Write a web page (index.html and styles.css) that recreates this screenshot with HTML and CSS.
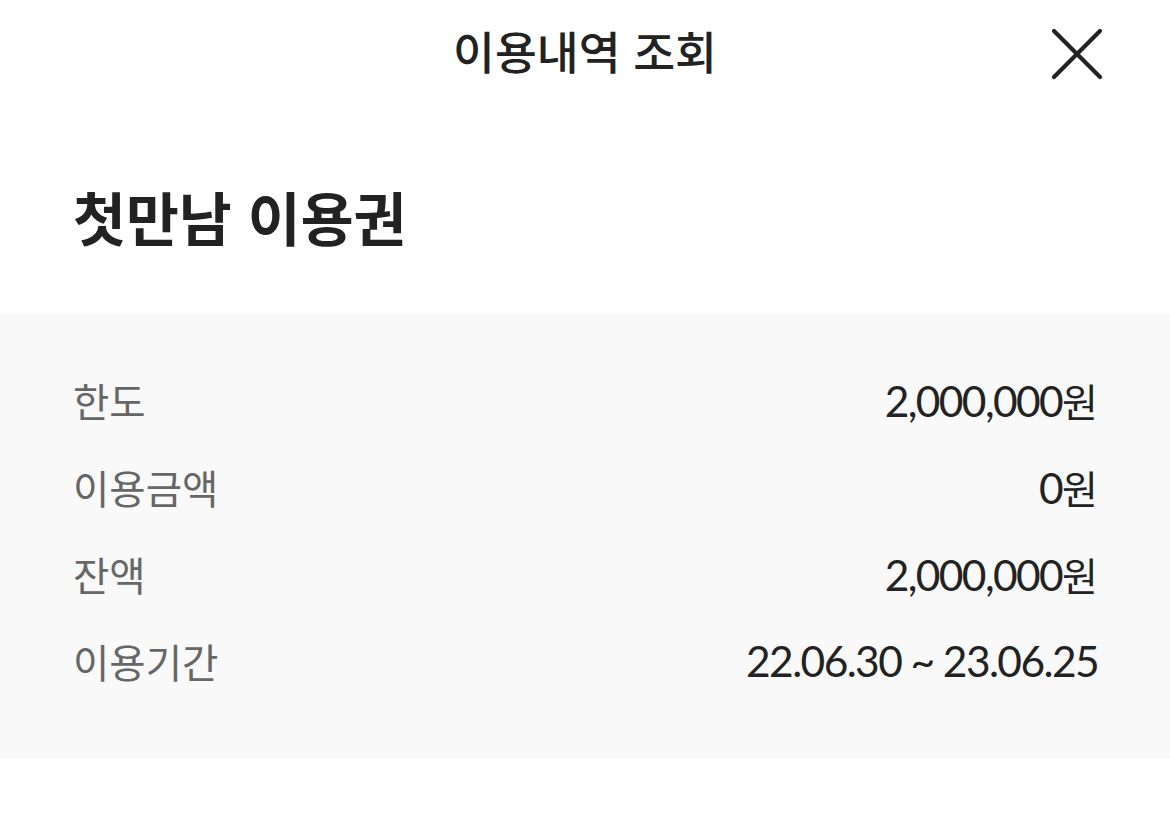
FILE: index.html
```html
<!DOCTYPE html>
<html lang="ko">
<head>
<meta charset="utf-8">
<link rel="stylesheet" href="styles.css">
</head>
<body>
<div class="page">
  <header class="header">
    <h1 class="header-title">이용내역 조회</h1>
    <button class="close" aria-label="닫기">
      <svg width="52" height="52" viewBox="0 0 52 52"><path d="M3 3 L49 49 M49 3 L3 49" stroke="#222" stroke-width="4.2" stroke-linecap="round" fill="none"/></svg>
    </button>
  </header>
  <section class="title-block">
    <h2 class="title">첫만남 이용권</h2>
  </section>
  <section class="details">
    <div class="row"><span class="label">한도</span><span class="value">2,000,000<span class="won">원</span></span></div>
    <div class="row"><span class="label">이용금액</span><span class="value">0<span class="won">원</span></span></div>
    <div class="row"><span class="label">잔액</span><span class="value">2,000,000<span class="won">원</span></span></div>
    <div class="row"><span class="label">이용기간</span><span class="value">22.06.30 ~ 23.06.25</span></div>
  </section>
</div>
</body>
</html>
```
FILE: styles.css
```css
* { box-sizing: border-box; }
html, body { margin: 0; padding: 0; background: #fff; }
body { font-family: "Noto Sans CJK KR", "Noto Sans", sans-serif; color: #222; }
.page { width: 1170px; }
.header {
  position: relative;
  height: 102px;
  display: flex;
  align-items: center;
  justify-content: center;
}
.header-title {
  margin: 0;
  font-size: 45.5px;
  font-weight: 500;
  line-height: 1;
  color: #222;
}
.close {
  position: absolute;
  right: 67px;
  top: 28px;
  width: 52px;
  height: 52px;
  padding: 0;
  border: 0;
  background: none;
  display: flex;
}
.title-block {
  padding: 81px 73px 65px;
}
.title {
  margin: 0;
  font-size: 57.5px;
  font-weight: 700;
  line-height: 66px;
  color: #222;
}
.details {
  background: #f9f9f9;
  padding: 42px 72px 55px 73px;
}
.row {
  height: 87px;
  display: flex;
  align-items: center;
  justify-content: space-between;
}
.label {
  font-size: 39.5px;
  color: #666;
  font-weight: 400;
}
.value {
  font-family: "Lato", "Noto Sans CJK KR", sans-serif;
  font-size: 42.5px;
  color: #222;
  letter-spacing: -1.6px;
}
.won {
  font-family: "Noto Sans CJK KR", sans-serif;
  font-size: 39px;
  letter-spacing: 0;
}
```
